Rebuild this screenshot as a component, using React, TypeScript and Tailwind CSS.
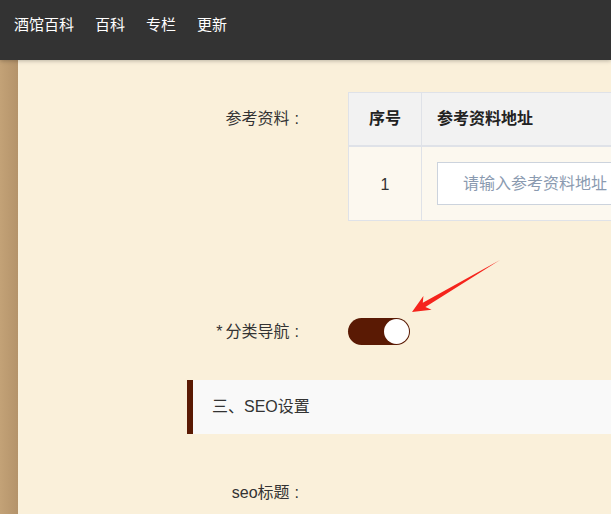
import React from 'react';

const navItems = ['酒馆百科', '百科', '专栏', '更新'];

const font = { fontFamily: '"Liberation Sans", "Noto Sans CJK SC", sans-serif' };

const FieldLabel: React.FC<{ text: React.ReactNode; className?: string }> = ({ text, className }) => (
  <label className={`w-[113px] shrink-0 flex items-center justify-end text-[16px] text-[#333] ${className ?? ''}`}>
    <span>{text}</span>
    <span className="ml-[5px] mr-[1px]">:</span>
  </label>
);

const App: React.FC = () => {
  return (
    <div className="h-screen w-full flex flex-col overflow-hidden text-[#333]" style={font}>
      {/* top bar */}
      <header className="h-[60px] shrink-0 bg-[#333333] flex items-center pl-[14px] pb-[9px] gap-[21px] relative z-10 shadow-[0_1px_4px_rgba(0,0,0,0.25)]">
        {navItems.map((item) => (
          <span key={item} className="text-white text-[15px]">
            {item}
          </span>
        ))}
      </header>

      <div className="flex flex-1 min-h-0">
        <div className="w-[18px] shrink-0 bg-gradient-to-r from-[#c3a277] to-[#b4936a]" />

        <main className="relative flex-1 bg-[#faf0da] overflow-hidden pl-[169px] pt-[32px]">
          {/* reference rows */}
          <div className="flex">
            <FieldLabel text="参考资料" className="h-[54px]" />
            <div className="ml-[48px] w-[420px] shrink-0 border border-[#dfe2e8]">
              <div className="flex h-[54px] bg-[#f2f2f2] border-b-2 border-[#dfe2e8] font-bold text-[16px] text-[#222]">
                <div className="w-[73px] border-r border-[#dfe2e8] flex items-center justify-center">序号</div>
                <div className="flex-1 flex items-center pl-[15px]">参考资料地址</div>
              </div>
              <div className="flex h-[73px] bg-[#fcf8ef]">
                <div className="w-[73px] border-r border-[#dfe2e8] flex items-center justify-center text-[16px] pt-[2px]">1</div>
                <div className="flex-1 flex items-center pl-[15px]">
                  <input
                    className="w-[300px] h-[43px] bg-white border border-[#ccd3dd] pl-[25px] text-[16px] outline-none placeholder:text-[#8a9ab0]"
                    placeholder="请输入参考资料地址"
                  />
                </div>
              </div>
            </div>
          </div>

          {/* category nav switch */}
          <div className="flex mt-[97px]">
            <FieldLabel text={<><span className="mr-[3px]">*</span>分类导航</>} className="h-[27px]" />
            <div className="ml-[48px] w-[62px] h-[27px] rounded-full bg-[#5a1a04] flex items-center justify-end pr-[1px]">
              <span className="w-[25px] h-[25px] rounded-full bg-white" />
            </div>
          </div>

          {/* section title */}
          <div className="mt-[35px] h-[54px] bg-[#f9f9f9] border-l-[6px] border-[#5a1a04] flex items-center pl-[19px] text-[16px]">
            三、SEO设置
          </div>

          <div className="flex mt-[49px]">
            <FieldLabel text="seo标题" className="h-[20px]" />
          </div>

          {/* red annotation arrow */}
          <svg className="absolute left-0 top-0 pointer-events-none" width="593" height="454" viewBox="18 60 593 454">
            <polygon
              points="412,312 431.6,309.7 425.4,307.1 500,260 422.8,302.7 423.4,295.9"
              fill="#f5241c"
            />
          </svg>
        </main>
      </div>
    </div>
  );
};

export default App;
